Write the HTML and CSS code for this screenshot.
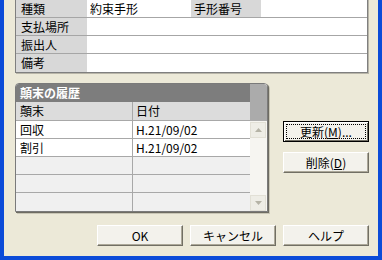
FILE: index.html
```html
<!DOCTYPE html>
<html lang="ja">
<head>
<meta charset="utf-8">
<link rel="stylesheet" href="styles.css">
</head>
<body>
<div class="dialog">
  <div class="info">
    <div class="irow">
      <div class="lab">種類</div>
      <div class="val v1">約束手形</div>
      <div class="lab lab2">手形番号</div>
      <div class="val grow"></div>
    </div>
    <div class="irow">
      <div class="lab">支払場所</div>
      <div class="val grow"></div>
    </div>
    <div class="irow">
      <div class="lab">振出人</div>
      <div class="val grow"></div>
    </div>
    <div class="irow last">
      <div class="lab">備考</div>
      <div class="val grow"></div>
    </div>
  </div>

  <div class="middle">
    <div class="panel">
      <div class="pdata">
        <div class="caption">顛末の履歴</div>
        <div class="hrow">
          <div class="c1">顛末</div>
          <div class="c2">日付</div>
        </div>
        <div class="drow filled"><div class="c1">回収</div><div class="c2">H.21/09/02</div></div>
        <div class="drow filled"><div class="c1">割引</div><div class="c2">H.21/09/02</div></div>
        <div class="drow"><div class="c1"></div><div class="c2"></div></div>
        <div class="drow"><div class="c1"></div><div class="c2"></div></div>
        <div class="drow endrow"><div class="c1"></div><div class="c2"></div></div>
      </div>
      <div class="pscroll">
        <div class="stop"></div>
        <div class="sbar">
          <div class="sbtn">
            <svg width="7" height="4" viewBox="0 0 7 4"><path d="M0 4 L3.5 0 L7 4 Z" fill="#B5B3A6"/></svg>
          </div>
          <div class="strack"></div>
          <div class="sbtn">
            <svg width="7" height="4" viewBox="0 0 7 4"><path d="M0 0 L3.5 4 L7 0 Z" fill="#B5B3A6"/></svg>
          </div>
        </div>
      </div>
    </div>
    <div class="sidebtns">
      <div class="btn focus"><span class="frect">更新(<u>M</u>)...</span></div>
      <div class="btn">削除(<u>D</u>)</div>
    </div>
  </div>

  <div class="bottom">
    <div class="btn">OK</div>
    <div class="btn">キャンセル</div>
    <div class="btn">ヘルプ</div>
  </div>
</div>
</body>
</html>
```

FILE: styles.css
```css
html, body {
  margin: 0;
  padding: 0;
  background: #ECE9D8;
}
body {
  font-family: "Noto Sans CJK JP", "DejaVu Sans", sans-serif;
  font-size: 12px;
  color: #000;
}
.dialog {
  width: 382px;
  height: 260px;
  box-sizing: border-box;
  background: #ECE9D8;
  border-left: 4px solid #0B4BD8;
  border-right: 4px solid #0B4BD8;
  border-bottom: 4px solid #0B4BD8;
  padding: 0 9px 0 11px;
  display: flex;
  flex-direction: column;
  overflow: hidden;
}
.info {
  margin-top: -1px;
  width: 353px;
  box-sizing: border-box;
  border: 1px solid #7F7F7F;
  background: #fff;
  box-shadow: 1px 1px 0 #B8B5A8;
}
.irow {
  display: flex;
  height: 18px;
  box-sizing: border-box;
  border-bottom: 1px solid #A6A6A6;
  line-height: 17px;
}
.irow.last { border-bottom: none; }
.lab {
  width: 71px;
  background: #D8D8D8;
  padding-left: 5px;
  box-sizing: border-box;
  white-space: nowrap;
}
.lab2 { width: 70px; padding-left: 3px; }
.val {
  background: #fff;
  padding-left: 3px;
  box-sizing: border-box;
  white-space: nowrap;
}
.v1 { width: 104px; }
.grow { flex: 1; }

.middle {
  display: flex;
  margin-top: 10px;
  align-items: flex-start;
}
.panel {
  display: flex;
  width: 253px;
  box-sizing: border-box;
  border: 1px solid #7A7A7A;
  border-radius: 4px 4px 0 0;
  background: #fff;
  box-shadow: 1px 1px 0 #6E6C62, 2px 2px 0 #C9C6B6;
  overflow: hidden;
}
.pdata {
  width: 234px;
  display: flex;
  flex-direction: column;
}
.caption {
  height: 18px;
  line-height: 18px;
  background: #7D7D7D;
  color: #fff;
  font-weight: bold;
  padding-left: 4px;
}
.hrow, .drow {
  display: flex;
  height: 18px;
  line-height: 17px;
  box-sizing: border-box;
  border-bottom: 1px solid #A8A8A8;
}
.hrow {
  background: #DCDCDC;
  height: 19px;
  line-height: 18px;
}
.drow { background: #F0F0F0; }
.drow.filled { background: #fff; }
.drow.endrow { border-bottom: none; }
.c1 {
  width: 117px;
  box-sizing: border-box;
  padding-left: 4px;
  border-right: 1px solid #A8A8A8;
}
.c2 {
  flex: 1;
  padding-left: 3px;
}
.pscroll {
  width: 17px;
  display: flex;
  flex-direction: column;
  background: #F6F5F1;
}
.stop {
  height: 37px;
  background: #ABABAB;
}
.sbar {
  display: flex;
  flex-direction: column;
  height: 90px;
}
.sbtn {
  height: 16px;
  margin: 1px 1px 0 0;
  background: #EEEDE6;
  border: 1px solid #E2E0D6;
  box-sizing: border-box;
  display: flex;
  align-items: center;
  justify-content: center;
}
.strack { flex: 1; background: #F6F5F1; }

.sidebtns {
  margin-left: 15px;
  margin-top: 38px;
  display: flex;
  flex-direction: column;
  gap: 10px;
}
.btn {
  width: 86px;
  height: 21px;
  box-sizing: border-box;
  background: #F3F2EC;
  border: 1px solid;
  border-color: #FFFFFF #716F64 #716F64 #FFFFFF;
  box-shadow: inset -1px -1px 0 #ACA899;
  display: flex;
  align-items: center;
  justify-content: center;
  line-height: 14px;
}
.btn u { text-decoration: underline; }
.btn.focus {
  border: 1px solid #000;
  box-shadow: inset 1px 1px 0 #fff, inset -1px -1px 0 #716F64;
  padding: 2px;
}
.frect {
  flex: 1;
  align-self: stretch;
  border: 1px dotted #000;
  display: flex;
  align-items: center;
  justify-content: center;
}
.bottom {
  display: flex;
  justify-content: flex-end;
  gap: 7px;
  margin-top: auto;
  margin-bottom: 10px;
}
```
